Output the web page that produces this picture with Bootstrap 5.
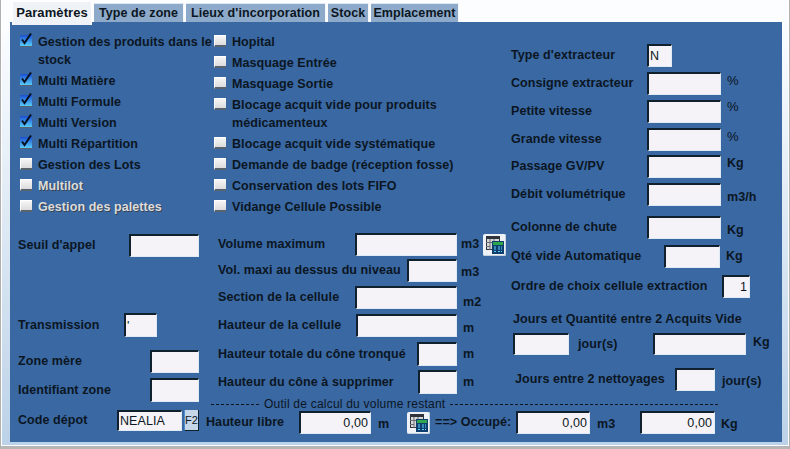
<!DOCTYPE html>
<html lang="fr">
<head>
    <meta charset="UTF-8">
    <meta name="viewport" content="width=device-width, initial-scale=1.0">
    <title>Paramètres zone</title>
    <link href="https://cdn.jsdelivr.net/npm/bootstrap@5.3.0/dist/css/bootstrap.min.css" rel="stylesheet">
    <style>
        html, body { margin: 0; width: 790px; height: 449px; overflow: hidden; background: #fbfdff; }
        body, .form-control, .btn, .nav-link {
            font-family: "Liberation Sans", Arial, sans-serif;
            font-size: 12.5px;
            letter-spacing: .08px;
            color: #0b1622;
        }
        .dlg-frame {
            width: 790px; height: 449px;
            padding: 1px 7px 0 9px;
            border-left: 1px solid #b0b0b0;
            border-right: 1px solid #b0b0b0;
            border-bottom: 3px solid #b6b6b6;
            box-shadow: inset 1px 0 0 #fff, inset -1px 0 0 #fff, inset 0 -1px 0 #fff;
            background: linear-gradient(#fbfdff 0, #fbfdff 6%, #bcd2e8 100%);
        }
        .dlg-tabs { height: 21px; border: 0; gap: 2px; padding-left: 2px; flex-wrap: nowrap; }
        .dlg-tabs .nav-link {
            height: 19px; margin: 2px 0 0; padding: 0; line-height: 18px; border: 0; border-radius: 0;
            background: #8eaaca; font-weight: 700; text-align: center;
            border-top: 1px solid #dfe8f2; border-right: 1px solid #f4f6fa;
        }
        .dlg-tabs .nav-link.active {
            height: 24px; margin-top: 0; position: relative; z-index: 1;
            background: #eff3f8; font-size: 13px; line-height: 22px; color: #0b1622;
            border: 1px solid #fff; border-bottom: 0;
        }
        .tab-params { width: 80px; }
        .tab-type { width: 90px; }
        .tab-lieux { width: 140px; }
        .tab-stock { width: 41px; }
        .tab-empl { width: 88px; }

        .dlg-panel { height: 420px; background: #3a68a3; display: flex; padding-left: 8px; }
        .col-a { width: 188px; padding-top: 11px; }
        .col-right { flex: 1; }
        .top-cols { display: flex; height: 372px; }
        .col-b { width: 299px; padding-top: 11px; }
        .col-c { width: 277px; padding-top: 22px; }

        .chk-list { height: 186px; }
        .chk-list-b { padding-left: 8px; }
        .chk-list-a { padding-left: 2px; }
        .chk-row { display: flex; padding-bottom: 3px; font-weight: 700; line-height: 18px; }
        .chk-row label { white-space: nowrap; }
        .chk-box.form-check-input {
            flex: none; width: 12px; height: 12px; margin: 2px 6px 0 0;
            border: 0; border-radius: 0;
            border-left: 1px solid #fff; border-top: 1px solid #fff;
            border-bottom: 2px solid #59636e;
            background: linear-gradient(#f6f6f6, #dcdcdc);
            box-shadow: none; opacity: 1;
        }
        .chk-box.form-check-input:checked {
            height: 14px; margin-top: 0; border: 0;
            background-color: transparent;
            background-image:
                url("data:image/svg+xml,%3Csvg xmlns='http://www.w3.org/2000/svg' viewBox='0 0 12 14'%3E%3Cpath d='M2 6.500l2.500 3.500L11 .5' fill='none' stroke='%23061020' stroke-width='2'/%3E%3C/svg%3E"),
                linear-gradient(#59636e, #59636e),
                linear-gradient(#1c4fd0, #5cd8ff);
            background-repeat: no-repeat;
            background-size: 12px 14px, 12px 1px, 12px 12px;
            background-position: 0 0, 0 100%, 0 100%;
        }
        .chk-box.form-check-input:disabled ~ label { opacity: 1; }
        .lbl-off { color: #dcdcdc; text-shadow: 1px 1px 0 #39434e; }

        .fld-row { display: flex; align-items: center; font-weight: 700; white-space: nowrap; }
        .form-control.inp {
            flex: none; height: 100%; padding: 0 2px 0 1px; border-radius: 0; box-shadow: none;
            background: #f6f3f8; line-height: 1; font-weight: 400;
            border-style: solid; border-width: 2px 1px 1px 2px;
            border-color: #10202f #dfeaf5 #dfeaf5 #10202f;
        }
        .form-control.inp.txt-r { text-align: right; }

        /* colonne gauche */
        .row-a { width: 181px; justify-content: space-between; }
        .row-a-seuil { height: 23px; margin-top: 15px; }
        .row-a-trans { height: 24px; margin-top: 56px; width: 139px; }
        .row-a-zone { height: 23px; margin-top: 13px; }
        .row-a-ident { height: 24px; margin-top: 5px; }
        .row-a-code { height: 21px; margin-top: 8px; }
        .code-grp { display: flex; gap: 2px; height: 21px; }
        .btn.btn-f2 {
            width: 15px; height: 21px; padding: 0; border-radius: 0; font-weight: 400; font-size: 11px; letter-spacing: 0;
            background: #c4d6e8; border: 0; border-left: 1px solid #4f8ed0;
            border-right: 1px solid #10202f; border-bottom: 1px solid #10202f;
        }

        /* colonne centrale */
        .row-b { padding-left: 12px; }
        .row-b label { margin-right: auto; }
        .unit-b { width: 48px; padding-left: 4px; display: flex; align-items: center; }
        .unit-b-m { padding-left: 6px; }
        .row-b1 { height: 23px; margin-top: 14px; }
        .row-b2 { height: 23px; margin-top: 3px; }
        .row-b3 { height: 23px; margin-top: 4px; }
        .row-b4 { height: 23px; margin-top: 5px; }
        .row-b5 { height: 24px; margin-top: 5px; }
        .row-b6 { height: 24px; margin-top: 4px; }
        .drop-3 { padding-top: 3px; }
        .drop-5 { padding-top: 5px; }
        .drop-10 { padding-top: 10px; }
        .lift-6 { padding-bottom: 6px; }
        .lift-10 { padding-bottom: 10px; }
        .lift-4 { padding-bottom: 4px; }
        .btn.btn-calc {
            flex: none; width: 23px; height: 22px; padding: 0; border: 0; border-radius: 2px;
            background: #eef2f6; display: flex; align-items: center; justify-content: center;
            box-shadow: inset -1px -1px 0 #c4d2e0;
        }
        .btn-calc-vol { margin-left: 4px; }

        .w-25px { width: 25px; }
        .w-28px { width: 28px; }
        .w-33px { width: 33px; }
        .w-39px { width: 39px; }
        .w-40px { width: 40px; }
        .w-49px { width: 49px; }
        .w-50px { width: 50px; }
        .w-56px { width: 56px; }
        .w-65px { width: 65px; }
        .w-70px { width: 70px; }
        .w-72px { width: 72px; }
        .w-74px { width: 74px; }
        .w-75px { width: 75px; }
        .w-93px { width: 93px; }
        .w-101px { width: 101px; }
        .w-102px { width: 102px; }

        /* colonne droite */
        .row-c { padding-left: 6px; height: 23px; }
        .row-c label { flex: none; width: 136px; }
        .row-c .lbl-qte { width: 153px; }
        .row-c .lbl-ordre { width: 211px; }
        .unit-c { margin-left: 6px; }
        .unit-pct { font-weight: 400; letter-spacing: 0; font-size: 13px; }
        .mt-c4 { margin-top: 4px; }
        .mt-c5 { margin-top: 5px; }
        .mt-c6 { margin-top: 6px; }
        .mt-c7 { margin-top: 7px; }
        .mt-c10 { margin-top: 10px; }
        .head-jours { padding-left: 8px; margin-top: 12px; height: 18px; line-height: 18px; font-weight: 700; }
        .row-jours { padding-left: 8px; height: 22px; margin-top: 5px; }
        .row-jours .unit-j1 { margin-left: 9px; width: 75px; }
        .row-jours .unit-j2 { margin-left: 7px; }
        .row-nett { padding-left: 10px; height: 23px; margin-top: 13px; }
        .row-nett label { width: 160px; }
        .row-nett .unit-j2 { margin-left: 7px; }

        /* outil de calcul */
        .outil-row { display: flex; align-items: center; height: 13px; width: 507px; margin: 4px 0 0 5px; gap: 5px; line-height: 13px; font-size: 12px; font-weight: 400; letter-spacing: .22px; }
        .outil-dash { border-top: 1px dashed #0b1622; }
        .outil-dash-l { width: 48px; }
        .outil-dash-r { flex: 1; }
        .calc-row { height: 23px; }
        .calc-row label { flex: none; }
        .lbl-libre { width: 93px; }
        .unit-m { width: 36px; padding-left: 7px; }
        .lbl-occ { width: 81px; margin-left: 5px; }
        .unit-m3 { width: 50px; padding-left: 7px; }
        .unit-kg { padding-left: 6px; }
    </style>
</head>
<body>
    <svg width="0" height="0" class="d-block">
        <symbol id="ico-calc" viewBox="0 0 18 18">
            <rect x="0.500" y="0.500" width="13" height="13" fill="#d8d8d8" stroke="#30343a"/>
            <rect x="0" y="0" width="14" height="3" fill="#30343a"/>
            <path d="M4 3v11M8 3v4M0 6.500h8M0 10.500h4" stroke="#6a6e74" fill="none"/>
            <rect x="6" y="5" width="12" height="13" fill="#0e3e6e"/>
            <rect x="7" y="6" width="10" height="3" fill="#2ea84c"/>
            <path d="M8 11h2M12 11h2M15 11h1M8 13h2M12 13h2M15 13h1M8 15.500h2M12 15.500h2M15 15.500h1" stroke="#5cd2ff" fill="none"/>
        </symbol>
    </svg>
    <div class="dlg-frame">
        <ul class="nav nav-tabs dlg-tabs">
            <li class="nav-item"><a class="nav-link active tab-params" href="#">Paramètres</a></li>
            <li class="nav-item"><a class="nav-link tab-type" href="#">Type de zone</a></li>
            <li class="nav-item"><a class="nav-link tab-lieux" href="#">Lieux d'incorporation</a></li>
            <li class="nav-item"><a class="nav-link tab-stock" href="#">Stock</a></li>
            <li class="nav-item"><a class="nav-link tab-empl" href="#">Emplacement</a></li>
        </ul>
        <div class="dlg-panel">
            <div class="col-a">
                <div class="chk-list chk-list-a">
                    <div class="chk-row"><input class="form-check-input chk-box" type="checkbox" checked id="c1"><label for="c1">Gestion des produits dans le<br>stock</label></div>
                    <div class="chk-row"><input class="form-check-input chk-box" type="checkbox" checked id="c2"><label for="c2">Multi Matière</label></div>
                    <div class="chk-row"><input class="form-check-input chk-box" type="checkbox" checked id="c3"><label for="c3">Multi Formule</label></div>
                    <div class="chk-row"><input class="form-check-input chk-box" type="checkbox" checked id="c4"><label for="c4">Multi Version</label></div>
                    <div class="chk-row"><input class="form-check-input chk-box" type="checkbox" checked id="c5"><label for="c5">Multi Répartition</label></div>
                    <div class="chk-row"><input class="form-check-input chk-box" type="checkbox" id="c6"><label for="c6">Gestion des Lots</label></div>
                    <div class="chk-row"><input class="form-check-input chk-box" type="checkbox" disabled id="c7"><label class="lbl-off" for="c7">Multilot</label></div>
                    <div class="chk-row"><input class="form-check-input chk-box" type="checkbox" disabled id="c8"><label class="lbl-off" for="c8">Gestion des palettes</label></div>
                </div>
                <div class="fld-row row-a row-a-seuil"><label>Seuil d'appel</label><input class="form-control inp w-70px" type="text"></div>
                <div class="fld-row row-a row-a-trans"><label>Transmission</label><input class="form-control inp w-33px" type="text" value="'"></div>
                <div class="fld-row row-a row-a-zone"><label>Zone mère</label><input class="form-control inp w-49px" type="text"></div>
                <div class="fld-row row-a row-a-ident"><label>Identifiant zone</label><input class="form-control inp w-49px" type="text"></div>
                <div class="fld-row row-a row-a-code"><label>Code dépot</label>
                    <div class="code-grp"><input class="form-control inp w-65px" type="text" value="NEALIA"><button class="btn btn-f2" type="button">F2</button></div>
                </div>
            </div>
            <div class="col-right">
                <div class="top-cols">
                    <div class="col-b">
                        <div class="chk-list chk-list-b">
                            <div class="chk-row"><input class="form-check-input chk-box" type="checkbox" id="h1"><label for="h1">Hopital</label></div>
                            <div class="chk-row"><input class="form-check-input chk-box" type="checkbox" id="h2"><label for="h2">Masquage Entrée</label></div>
                            <div class="chk-row"><input class="form-check-input chk-box" type="checkbox" id="h3"><label for="h3">Masquage Sortie</label></div>
                            <div class="chk-row"><input class="form-check-input chk-box" type="checkbox" id="h4"><label for="h4">Blocage acquit vide pour produits<br>médicamenteux</label></div>
                            <div class="chk-row"><input class="form-check-input chk-box" type="checkbox" id="h5"><label for="h5">Blocage acquit vide systématique</label></div>
                            <div class="chk-row"><input class="form-check-input chk-box" type="checkbox" id="h6"><label for="h6">Demande de badge (réception fosse)</label></div>
                            <div class="chk-row"><input class="form-check-input chk-box" type="checkbox" id="h7"><label for="h7">Conservation des lots FIFO</label></div>
                            <div class="chk-row"><input class="form-check-input chk-box" type="checkbox" id="h8"><label for="h8">Vidange Cellule Possible</label></div>
                        </div>
                        <div class="fld-row row-b row-b1"><label>Volume maximum</label><input class="form-control inp w-102px" type="text"><div class="unit-b">m3<button class="btn btn-calc btn-calc-vol" type="button"><svg width="18" height="18"><use href="#ico-calc"/></svg></button></div></div>
                        <div class="fld-row row-b row-b2"><label>Vol. maxi au dessus du niveau</label><input class="form-control inp w-50px" type="text"><div class="unit-b drop-3">m3</div></div>
                        <div class="fld-row row-b row-b3"><label>Section de la cellule</label><input class="form-control inp w-102px" type="text"><div class="unit-b unit-b-m drop-10">m2</div></div>
                        <div class="fld-row row-b row-b4"><label>Hauteur de la cellule</label><input class="form-control inp w-101px" type="text"><div class="unit-b unit-b-m drop-5">m</div></div>
                        <div class="fld-row row-b row-b5"><label>Hauteur totale du cône tronqué</label><input class="form-control inp w-40px" type="text"><div class="unit-b unit-b-m">m</div></div>
                        <div class="fld-row row-b row-b6"><label>Hauteur du cône à supprimer</label><input class="form-control inp w-39px" type="text"><div class="unit-b unit-b-m">m</div></div>
                    </div>
                    <div class="col-c">
                        <div class="fld-row row-c"><label>Type d'extracteur</label><input class="form-control inp w-25px" type="text" value="N"></div>
                        <div class="fld-row row-c mt-c5"><label>Consigne extracteur</label><input class="form-control inp w-74px" type="text"><span class="unit-c unit-pct lift-6">%</span></div>
                        <div class="fld-row row-c mt-c5"><label>Petite vitesse</label><input class="form-control inp w-74px" type="text"><span class="unit-c unit-pct lift-10">%</span></div>
                        <div class="fld-row row-c mt-c5"><label>Grande vitesse</label><input class="form-control inp w-74px" type="text"><span class="unit-c unit-pct lift-6">%</span></div>
                        <div class="fld-row row-c mt-c4"><label>Passage GV/PV</label><input class="form-control inp w-74px" type="text"><span class="unit-c lift-6">Kg</span></div>
                        <div class="fld-row row-c mt-c5"><label>Débit volumétrique</label><input class="form-control inp w-74px" type="text"><span class="unit-c drop-5">m3/h</span></div>
                        <div class="fld-row row-c mt-c10"><label>Colonne de chute</label><input class="form-control inp w-74px" type="text"><span class="unit-c drop-5">Kg</span></div>
                        <div class="fld-row row-c mt-c6"><label class="lbl-qte">Qté vide Automatique</label><input class="form-control inp w-56px" type="text"><span class="unit-c">Kg</span></div>
                        <div class="fld-row row-c mt-c7"><label class="lbl-ordre">Ordre de choix cellule extraction</label><input class="form-control inp txt-r w-28px" type="text" value="1"></div>
                        <div class="head-jours">Jours et Quantité entre 2 Acquits Vide</div>
                        <div class="fld-row row-jours"><input class="form-control inp w-56px" type="text"><span class="unit-j1">jour(s)</span><input class="form-control inp w-93px" type="text"><span class="unit-j2 lift-4">Kg</span></div>
                        <div class="fld-row row-nett"><label>Jours entre 2 nettoyages</label><input class="form-control inp w-40px" type="text"><span class="unit-j2 drop-3">jour(s)</span></div>
                    </div>
                </div>
                <div class="outil-row"><span class="outil-dash outil-dash-l"></span><span>Outil de calcul du volume restant</span><span class="outil-dash outil-dash-r"></span></div>
                <div class="fld-row calc-row">
                    <label class="lbl-libre">Hauteur libre</label><input class="form-control inp txt-r w-72px" type="text" value="0,00">
                    <div class="unit-m drop-3">m</div>
                    <button class="btn btn-calc" type="button"><svg width="18" height="18"><use href="#ico-calc"/></svg></button>
                    <label class="lbl-occ">==&gt; Occupé:</label><input class="form-control inp txt-r w-74px" type="text" value="0,00">
                    <div class="unit-m3 drop-3">m3</div>
                    <input class="form-control inp txt-r w-75px" type="text" value="0,00">
                    <div class="unit-kg drop-3">Kg</div>
                </div>
            </div>
        </div>
    </div>
    <script src="https://cdn.jsdelivr.net/npm/bootstrap@5.3.0/dist/js/bootstrap.bundle.min.js"></script>
</body>
</html>
